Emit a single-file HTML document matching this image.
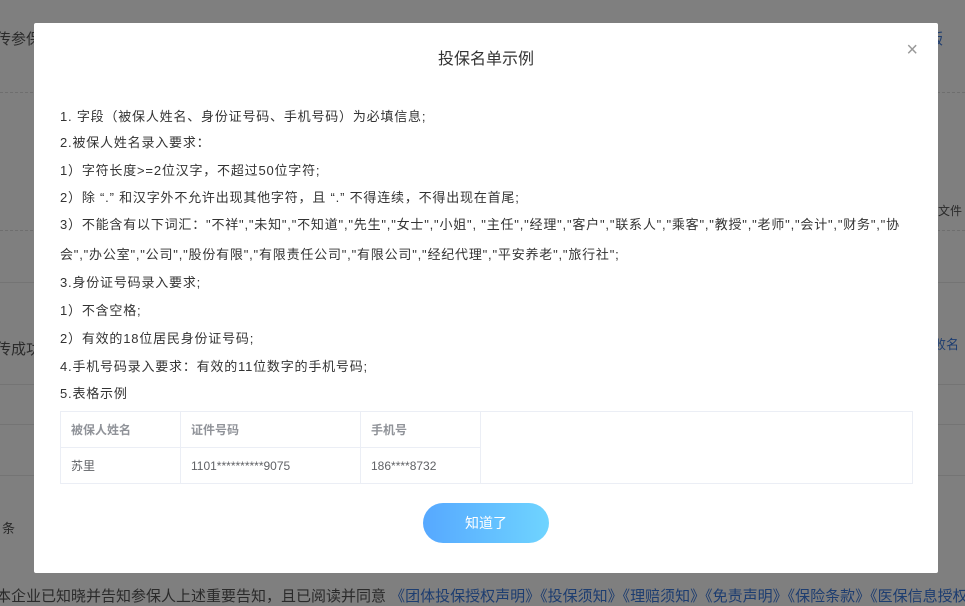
<!DOCTYPE html>
<html><head><meta charset="utf-8">
<style>
*{margin:0;padding:0;box-sizing:border-box}
body{width:965px;height:603px;overflow:hidden;background:#7f7f7f;font-family:"Liberation Sans","Noto Sans CJK SC",sans-serif;position:relative;color:#333}
.bg{position:absolute;font-size:15px;color:#2a2a2a;white-space:nowrap}
.dash{position:absolute;left:0;right:0;border-top:1px dashed #6e6e6e}
.ln{position:absolute;left:0;right:0;border-top:1px solid #747474}
.modal{position:absolute;left:34px;top:23px;width:904px;height:550px;background:#fff;border-radius:2px}
.title{position:absolute;top:22px;left:0;right:0;text-align:center;font-size:16px;color:#333}
.close{position:absolute;right:20px;top:16px;font-size:20px;color:#999;font-weight:300}
.l{position:absolute;left:26px;font-size:13px;color:#333;white-space:nowrap;line-height:18px;letter-spacing:0.8px}
table{position:absolute;left:26px;top:388px;width:853px;border-collapse:collapse;font-size:12px}
td{border:1px solid #ebeef5;height:36px;padding-left:10px;color:#606266}
th{border:1px solid #ebeef5;height:36px;padding-left:10px;color:#909399;text-align:left;font-weight:bold}
.btn{position:absolute;left:389px;top:480px;width:126px;height:40px;border-radius:20px;background:linear-gradient(90deg,#56a8ff,#6fd4ff);color:#fff;font-size:14px;text-align:center;line-height:40px}
</style></head><body>
<div class="bg" style="left:-4px;top:28px">传参保</div>
<div class="bg" style="left:928px;top:28px;color:#1d3d70">版</div>
<div class="dash" style="top:92px"></div>
<div class="bg" style="left:938px;top:202px;font-size:12px">文件</div>
<div class="dash" style="top:230px"></div>
<div class="ln" style="top:282px"></div>
<div class="bg" style="left:-4px;top:338px">传成功</div>
<div class="bg" style="left:933px;top:334px;color:#1d3d70;font-size:13px">败名</div>
<div class="ln" style="top:384px"></div>
<div class="ln" style="top:424px"></div>
<div class="ln" style="top:475px"></div>
<div class="bg" style="left:2px;top:518px;font-size:13px">条</div>
<div class="bg" style="left:-4px;top:585px;font-size:15px">本企业已知晓并告知参保人上述重要告知，且已阅读并同意 <span style="color:#1d3d70">《团体投保授权声明》《投保须知》《理赔须知》《免责声明》《保险条款》《医保信息授权声明》</span></div>
<div class="modal">
<div class="title">投保名单示例</div>
<div class="close">×</div>
<div class="l" style="top:85px">1. 字段（被保人姓名、身份证号码、手机号码）为必填信息;</div>
<div class="l" style="top:111px">2.被保人姓名录入要求：</div>
<div class="l" style="top:139px">1）字符长度>=2位汉字，不超过50位字符;</div>
<div class="l" style="top:166px">2）除 “.” 和汉字外不允许出现其他字符，且 “.” 不得连续，不得出现在首尾;</div>
<div class="l" style="top:193px">3）不能含有以下词汇："不祥","未知","不知道","先生","女士","小姐", "主任","经理","客户","联系人","乘客","教授","老师","会计","财务","协</div>
<div class="l" style="top:223px">会","办公室","公司","股份有限","有限责任公司","有限公司","经纪代理","平安养老","旅行社";</div>
<div class="l" style="top:251px">3.身份证号码录入要求;</div>
<div class="l" style="top:279px">1）不含空格;</div>
<div class="l" style="top:307px">2）有效的18位居民身份证号码;</div>
<div class="l" style="top:335px">4.手机号码录入要求：有效的11位数字的手机号码;</div>
<div class="l" style="top:362px">5.表格示例</div>
<table>
<tr><th style="width:120px">被保人姓名</th><th style="width:180px">证件号码</th><th style="width:120px">手机号</th><td rowspan="2"></td></tr>
<tr><td>苏里</td><td>1101**********9075</td><td>186****8732</td></tr>
</table>
<div class="btn">知道了</div>
</div>
</body></html>
